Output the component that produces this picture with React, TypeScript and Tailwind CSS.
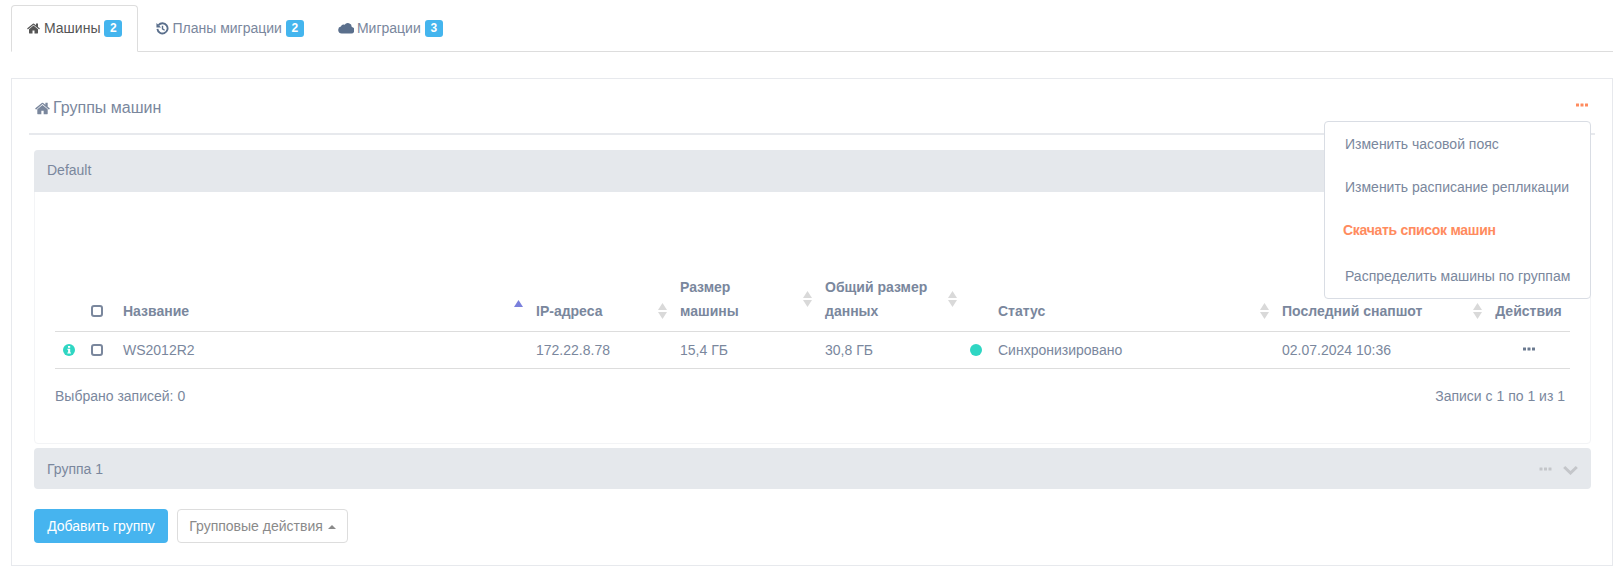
function Badge({ children }: { children: React.ReactNode }) {
  return (
    <span className="ml-1 inline-block h-[17px] min-w-[18px] rounded-[3px] bg-[#44b5ee] px-[5px] text-center text-[12px] font-bold leading-[17px] text-white">
      {children}
    </span>
  );
}

function HomeIcon({ className }: { className: string }) {
  return (
    <svg viewBox="0 0 1664 1408" className={className} fill="currentColor">
      <path d="M1408 800v480q0 26-19 45t-45 19H960V960H704v384H320q-26 0-45-19t-19-45V800q0-1 .5-3t.5-3l575-474 575 474q1 2 1 6zm223-69-62 74q-8 9-21 11h-3q-13 0-21-7L832 216 140 809q-12 8-24 7-13-2-21-11l-62-74q-8-10-7-23.5T37 686L756 87q32-26 76-26t76 26l244 204V96q0-14 9-23t23-9h192q14 0 23 9t9 23v408l219 182q10 8 11 21.500t-7 23.500z" />
    </svg>
  );
}

function Dots({ className }: { className: string }) {
  return (
    <svg viewBox="0 0 12 4" className={className} fill="currentColor">
      <rect x="0" y="0.5" width="3" height="3" rx="0.3" />
      <rect x="4.500" y="0.5" width="3" height="3" rx="0.3" />
      <rect x="9" y="0.5" width="3" height="3" rx="0.3" />
    </svg>
  );
}

function InfoIcon() {
  return (
    <svg viewBox="0 0 12 12" className="h-3 w-3">
      <circle cx="6" cy="6" r="6" fill="#2fd6c3" />
      <rect x="5" y="2" width="2.200" height="1.800" fill="#fff" />
      <path d="M4.300 4.800h2.900v3.600h.8v1H4.300v-1h.8V5.800h-.8z" fill="#fff" />
    </svg>
  );
}

function HistoryIcon() {
  return (
    <svg viewBox="0 0 14 14" className="mr-[3px] h-[13px] w-[13px] text-[#5a6f8c]" fill="none" stroke="currentColor">
      <path d="M2.700 3.400A5.500 5.500 0 1 1 1.500 7.500" strokeWidth="2" />
      <path d="M0.500 1v5h5z" fill="currentColor" stroke="none" />
      <path d="M7 4v3.500l2.300 1.400" strokeWidth="1.500" />
    </svg>
  );
}

function CloudIcon() {
  return (
    <svg viewBox="0 0 16 12" className="mr-[3px] h-[12px] w-[16px] text-[#5a6f8c]" fill="currentColor">
      <path d="M3.800 11.500A3.500 3.500 0 0 1 2.900 4.600 3 3 0 0 1 6.600 2.700 4 4 0 0 1 13.800 5a3.300 3.300 0 0 1-1.100 6.500z" />
    </svg>
  );
}

function SortArrows({ active = false }: { active?: boolean }) {
  if (active) {
    return (
      <svg width="9" height="16" viewBox="0 0 9 16" className="mb-[7px] shrink-0">
        <path d="M4.500 0 9 7H0z" fill="#7a80dc" />
      </svg>
    );
  }
  return (
    <svg width="9" height="16" viewBox="0 0 9 16" className="shrink-0">
      <path d="M4.500 0 9 7H0z" fill="#d9d9d9" />
      <path d="M4.500 16 9 9H0z" fill="#d9d9d9" />
    </svg>
  );
}

function Checkbox() {
  return <span className="block h-3 w-3 rounded-[3px] border-2 border-[#7a879d]" />;
}

function SortHeader({ lines, active }: { lines: string[]; active?: boolean }) {
  return (
    <th className="pb-2 pl-2 pr-[5px] text-left align-bottom font-bold">
      <div className="flex items-center justify-between">
        <span>
          {lines.map((l) => (
            <span key={l} className="block">
              {l}
            </span>
          ))}
        </span>
        <SortArrows active={active} />
      </div>
    </th>
  );
}

const menu = [
  { text: "Изменить часовой пояс", cls: "h-[44px] pl-5" },
  { text: "Изменить расписание репликации", cls: "h-[42px] pl-5" },
  { text: "Скачать список машин", cls: "h-[46px] pb-[3px] pl-[18px] font-bold tracking-[-0.3px] text-[#ff8b5e]" },
  { text: "Распределить машины по группам", cls: "h-[44px] pl-5" },
];

export default function App() {
  return (
    <div className="h-[572px] overflow-hidden bg-white px-[11px] pt-[5px] font-['Liberation_Sans',Arial,sans-serif] text-[14px] leading-5 text-[#7a879d]">
      {/* Tabs */}
      <div className="flex h-[47px] border-b border-[#ddd]">
        <div className="mr-0.5 flex h-[47px] items-center rounded-t border border-b-white border-[#ddd] bg-white px-[15px] pb-[1px] text-[#555]">
          <HomeIcon className="mr-1 h-[13px] w-[13px]" />
          Машины
          <Badge>2</Badge>
        </div>
        <div className="mr-0.5 flex h-[46px] items-center border border-transparent px-[15px]">
          <HistoryIcon />
          Планы миграции
          <Badge>2</Badge>
        </div>
        <div className="flex h-[46px] items-center border border-transparent px-[15px]">
          <CloudIcon />
          Миграции
          <Badge>3</Badge>
        </div>
      </div>

      {/* Panel */}
      <div className="relative mt-[26px] h-[488px] border border-[#e7e9ed] px-[17px]">
        <div className="flex h-[56px] items-center justify-between border-b-2 border-[#e7e9ed] pl-[6px] pr-[7px] pt-[4px]">
          <div className="flex items-center text-[16px]">
            <HomeIcon className="mr-[3px] h-[15px] w-[15px]" />
            Группы машин
          </div>
          <Dots className="mb-[7px] h-[4px] w-[12px] text-[#ff8b5e]" />
        </div>

        <div className="pl-[5px] pr-[4px]">
          <div className="mt-[15px] h-[294px] rounded border border-[#f3f4f6]">
            <div className="-mx-px -mt-px flex h-[42px] items-center rounded-t bg-[#e5e8ec] px-[13px] pb-[2px]">
              Default
            </div>

            <div className="ml-[20px] mr-[21px] mt-[83px]">
              <table className="w-full table-fixed border-collapse leading-6">
                <colgroup>
                  <col className="w-[32px]" />
                  <col className="w-[28px]" />
                  <col className="w-[413px]" />
                  <col className="w-[144px]" />
                  <col className="w-[145px]" />
                  <col className="w-[145px]" />
                  <col className="w-[28px]" />
                  <col className="w-[284px]" />
                  <col className="w-[213px]" />
                  <col className="w-[83px]" />
                </colgroup>
                <thead>
                  <tr className="border-b border-[#ddd]">
                    <th />
                    <th className="pb-[14px] pl-1 align-bottom">
                      <Checkbox />
                    </th>
                    <SortHeader lines={["Название"]} active />
                    <SortHeader lines={["IP-адреса"]} />
                    <SortHeader lines={["Размер", "машины"]} />
                    <SortHeader lines={["Общий размер", "данных"]} />
                    <th />
                    <SortHeader lines={["Статус"]} />
                    <SortHeader lines={["Последний снапшот"]} />
                    <th className="pb-2 text-center align-bottom font-bold">Действия</th>
                  </tr>
                </thead>
                <tbody className="leading-5">
                  <tr className="border-b border-[#ddd]">
                    <td className="pl-2">
                      <InfoIcon />
                    </td>
                    <td className="pl-1">
                      <Checkbox />
                    </td>
                    <td className="px-2 py-2">WS2012R2</td>
                    <td className="px-2 py-2">172.22.8.78</td>
                    <td className="px-2 py-2">15,4 ГБ</td>
                    <td className="px-2 py-2">30,8 ГБ</td>
                    <td className="pl-2">
                      <span className="block h-3 w-3 rounded-full bg-[#2fd6c3]" />
                    </td>
                    <td className="px-2 py-2">Синхронизировано</td>
                    <td className="px-2 py-2">02.07.2024 10:36</td>
                    <td>
                      <Dots className="mx-auto mb-[3px] h-[4px] w-[12px] text-[#6b7a90]" />
                    </td>
                  </tr>
                </tbody>
              </table>
              <div className="mt-[17px] flex justify-between pr-[4px]">
                <span>Выбрано записей: 0</span>
                <span>Записи с 1 по 1 из 1</span>
              </div>
            </div>
          </div>

          <div className="mt-[4px] flex h-[41px] items-center justify-between rounded bg-[#e5e8ec] pl-[13px] pr-[13px]">
            <span>Группа 1</span>
            <span className="flex items-center gap-[11px] text-[#c4c6ca]">
              <Dots className="h-[4px] w-[13px]" />
              <svg viewBox="0 0 15 10" className="mt-[2px] h-[10px] w-[15px]" fill="none" stroke="currentColor" strokeWidth="3">
                <path d="M1.200 2 7.500 8 13.800 2" />
              </svg>
            </span>
          </div>

          <div className="mt-5 flex gap-[9px]">
            <button className="h-[34px] w-[134px] rounded bg-[#46b4ef] text-white">Добавить группу</button>
            <button className="flex h-[34px] w-[171px] items-center justify-center rounded border border-[#ddd] text-[#8a8a8a]">
              Групповые действия
              <span className="ml-[5px] mt-[1px] h-0 w-0 border-x-4 border-b-4 border-x-transparent border-b-[#8a8a8a]" />
            </button>
          </div>
        </div>

        {/* Dropdown menu */}
        <div className="absolute left-[1312px] top-[42px] h-[178px] w-[267px] rounded border border-[#d9dde4] bg-white">
          {menu.map((m) => (
            <div key={m.text} className={`flex items-center ${m.cls}`}>
              {m.text}
            </div>
          ))}
        </div>
      </div>
    </div>
  );
}
